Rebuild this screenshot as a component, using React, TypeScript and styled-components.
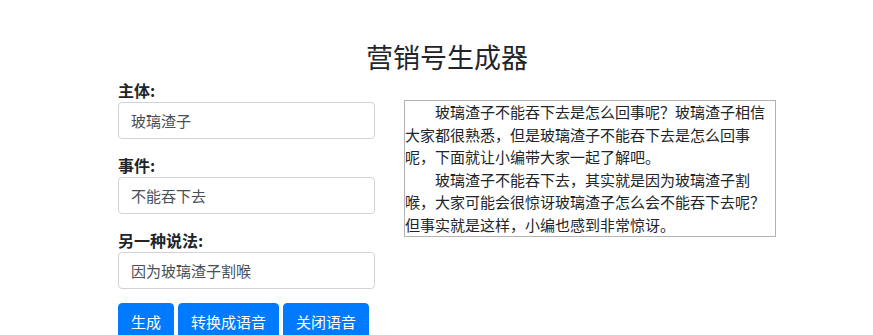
import React, { useState } from 'react';
import styled, { createGlobalStyle } from 'styled-components';

const GlobalStyle = createGlobalStyle`
   body {
      margin: 0;
      background: #fff;
      font-family: "Noto Sans CJK SC", "Noto Sans", sans-serif;
      color: #212529;
   }
`;

const Page = styled.div`
   width: 658px;
   margin-left: 118px;
   padding-top: 40px;
`;

const Title = styled.h3`
   margin: 0 0 4px;
   font-size: 27px;
   line-height: 34px;
   font-weight: 400;
   text-align: center;
   color: #212529;
`;

const Row = styled.div`
   display: flex;
   align-items: flex-start;
   gap: 29px;
`;

const FormColumn = styled.div`
   width: 257px;
   flex-shrink: 0;
`;

const FormGroup = styled.div`
   margin-bottom: 14px;
`;

const Label = styled.label`
   display: block;
   font-size: 16px;
   line-height: 24px;
   font-weight: 700;
`;

const Input = styled.input`
   display: block;
   box-sizing: border-box;
   width: 100%;
   height: 37px;
   padding: 6px 12px;
   border: 1px solid #ced4da;
   border-radius: 4px;
   font-family: inherit;
   font-size: 15px;
   color: #495057;
   outline: none;
`;

const ButtonRow = styled.div`
   display: flex;
   gap: 4px;
   margin-top: 13px;
`;

const Button = styled.button`
   flex-shrink: 0;
   height: 38px;
   padding: 6px 12px;
   border: 1px solid #007bff;
   border-radius: 4px;
   background: #007bff;
   color: #fff;
   font-family: inherit;
   font-size: 15px;
   line-height: 24px;
   white-space: nowrap;
   cursor: pointer;
`;

const Article = styled.div`
   box-sizing: border-box;
   width: 372px;
   margin-top: 22px;
   border: 1px solid #b3b3b3;
   font-size: 15px;
   line-height: 22.5px;
   color: #212529;
   line-break: strict;

   p {
      margin: 0;
      text-indent: 2em;
   }
`;

export default function App(): JSX.Element {
   const [subject, setSubject] = useState('玻璃渣子');
   const [event, setEvent] = useState('不能吞下去');
   const [reason, setReason] = useState('因为玻璃渣子割喉');

   return (
      <>
         <GlobalStyle />
         <Page>
            <Title>营销号生成器</Title>
            <Row>
               <FormColumn>
                  <FormGroup>
                     <Label>主体:</Label>
                     <Input value={subject} onChange={(e) => setSubject(e.target.value)} />
                  </FormGroup>
                  <FormGroup>
                     <Label>事件:</Label>
                     <Input value={event} onChange={(e) => setEvent(e.target.value)} />
                  </FormGroup>
                  <FormGroup>
                     <Label>另一种说法:</Label>
                     <Input value={reason} onChange={(e) => setReason(e.target.value)} />
                  </FormGroup>
                  <ButtonRow>
                     <Button>生成</Button>
                     <Button>转换成语音</Button>
                     <Button>关闭语音</Button>
                  </ButtonRow>
               </FormColumn>
               <Article>
                  <p>
                     {subject}{event}是怎么回事呢？{subject}相信大家都很熟悉，但是{subject}{event}是怎么回事呢，下面就让小编带大家一起了解吧。
                  </p>
                  <p>
                     {subject}{event}，其实就是{reason}，大家可能会很惊讶{subject}怎么会{event}呢？但事实就是这样，小编也感到非常惊讶。
                  </p>
               </Article>
            </Row>
         </Page>
      </>
   );
}
